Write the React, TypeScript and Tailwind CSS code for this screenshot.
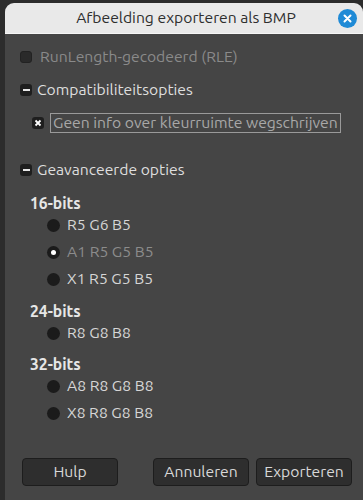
import React from "react";

const font = { fontFamily: "Ubuntu, 'Noto Sans', 'DejaVu Sans', sans-serif" };

function Expander({ label }: { label: string }) {
  return (
    <div className="flex items-center gap-[5px] h-[20px]">
      <span className="w-[12px] h-[12px] rounded-[3px] bg-[#1e1e1e] flex items-center justify-center">
        <span className="w-[7px] h-[2px] bg-[#e8e8e8]" />
      </span>
      <span className="text-[15.7px] text-[#dedede]">{label}</span>
    </div>
  );
}

function Radio({ label, checked }: { label: string; checked?: boolean }) {
  return (
    <div className="flex items-center gap-[7px] h-[20px] pl-[27px]">
      <span className="w-[13px] h-[13px] rounded-full bg-[#1b1b1b] flex items-center justify-center">
        {checked && <span className="w-[5px] h-[5px] rounded-full bg-white" />}
      </span>
      <span className={`text-[15.7px] ${checked ? "text-[#8c8c8c]" : "text-[#d6d6d6]"}`}>{label}</span>
    </div>
  );
}

function Button({ label }: { label: string }) {
  return (
    <button className="w-[96px] h-[28px] rounded-[4px] bg-[#2e2e2e] border border-[#1d1d1d] text-[15.7px] text-[#d8d8d8]">
      {label}
    </button>
  );
}

export default function App() {
  return (
    <div className="flex w-[363px] h-[500px] bg-[#2c2c2c]" style={font}>
      <div className="w-[5px] shrink-0" />
      <div className="flex-1 mt-[3px] flex flex-col rounded-t-[9px] overflow-hidden bg-[#454545]">
        <div className="h-[31px] shrink-0 bg-[#e9e9e9] border-b border-[#f6f6f6] flex items-center relative">
          <div className="flex-1 text-center text-[15.7px] text-[#2e2e2e] pl-[4px]">
            Afbeelding exporteren als BMP
          </div>
          <span className="absolute right-[6px] top-[6px] w-[19px] h-[19px] rounded-full bg-[#1f8ad6] flex items-center justify-center">
            <svg width="9" height="9" viewBox="0 0 9 9">
              <path d="M1.5 1.5 L7.5 7.5 M7.5 1.5 L1.5 7.5" stroke="white" strokeWidth="2" strokeLinecap="round" />
            </svg>
          </span>
        </div>

        <div className="flex-1 flex flex-col pl-[15px] pt-[13px]">
          <div className="flex items-center gap-[8px] h-[20px]">
            <span className="w-[12px] h-[12px] rounded-[3px] bg-[#2a2a2a] border border-[#222]" />
            <span className="text-[15.7px] text-[#8a8a8a]">RunLength-gecodeerd (RLE)</span>
          </div>

          <div className="mt-[13px]">
            <Expander label="Compatibiliteitsopties" />
          </div>

          <div className="mt-[13px] flex items-center gap-[6px] pl-[12px] h-[20px]">
            <span className="w-[12px] h-[12px] rounded-[3px] bg-[#1e1e1e] flex items-center justify-center">
              <svg width="8" height="8" viewBox="0 0 8 8">
                <path d="M1.5 1.5 L6.5 6.5 M6.5 1.5 L1.5 6.5" stroke="white" strokeWidth="1.8" />
              </svg>
            </span>
            <span className="border border-[#9a9a9a] px-[2px] h-[20px] flex items-center text-[15.7px] text-[#a8a8a8]">
              Geen info over kleurruimte wegschrijven
            </span>
          </div>

          <div className="mt-[27px]">
            <Expander label="Geavanceerde opties" />
          </div>

          <div className="mt-[13px] pl-[10px] text-[15.7px] font-bold text-[#e6e6e6] h-[20px] leading-[20px]">16-bits</div>
          <div className="mt-[2px] flex flex-col gap-[7px]">
            <Radio label="R5 G6 B5" />
            <Radio label="A1 R5 G5 B5" checked />
            <Radio label="X1 R5 G5 B5" />
          </div>

          <div className="mt-[12px] pl-[10px] text-[15.7px] font-bold text-[#e6e6e6] h-[20px] leading-[20px]">24-bits</div>
          <div className="mt-[2px] flex flex-col gap-[7px]">
            <Radio label="R8 G8 B8" />
          </div>

          <div className="mt-[11px] pl-[10px] text-[15.7px] font-bold text-[#e6e6e6] h-[20px] leading-[20px]">32-bits</div>
          <div className="mt-[2px] flex flex-col gap-[7px]">
            <Radio label="A8 R8 G8 B8" />
            <Radio label="X8 R8 G8 B8" />
          </div>

          <div className="mt-auto mb-[14px] flex items-center pr-[11px] pl-[2px]">
            <Button label="Hulp" />
            <div className="flex-1" />
            <Button label="Annuleren" />
            <div className="w-[7px]" />
            <Button label="Exporteren" />
          </div>
        </div>
      </div>
    </div>
  );
}
